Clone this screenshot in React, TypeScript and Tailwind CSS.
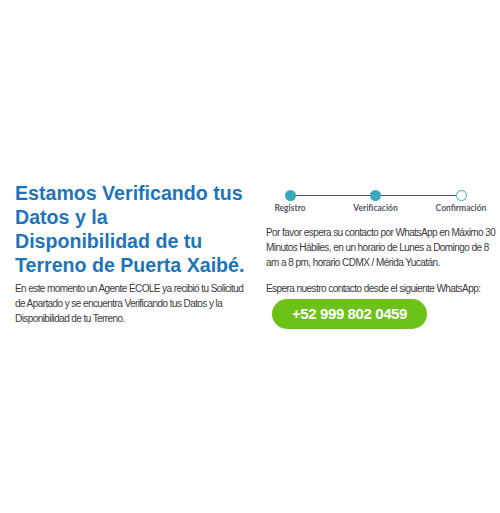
import React from "react";

export default function App() {
  const steps = ["Registro", "Verificación", "Confirmación"];
  return (
    <div className="w-[500px] h-[513px] bg-white" style={{ fontFamily: '"Liberation Sans", Arial, sans-serif' }}>
      <div className="flex pt-[181px] pl-[15px] pr-[5px] gap-[15px]">
        <div className="w-[235px] shrink-0">
          <h1 className="text-[19.6px] leading-[24px] font-bold text-[#1c75bc] whitespace-nowrap">
            Estamos Verificando tus
            <br />
            Datos y la
            <br />
            Disponibilidad de tu
            <br />
            Terreno de Puerta Xaibé.
          </h1>
          <p className="mt-[4px] text-[10px] leading-[15px] text-[#3a3a3a] tracking-[-0.58px] whitespace-nowrap">
            En este momento un Agente ÉCOLE ya recibió tu Solicitud
            <br />
            de Apartado y se encuentra Verificando tus Datos y la
            <br />
            Disponibilidad de tu Terreno.
          </p>
        </div>
        <div className="flex-1 pt-[9px]">
          <div className="relative flex justify-between w-[221px]" style={{ fontFamily: 'Lato, "Noto Sans", sans-serif' }}>
            <div className="absolute left-[30px] right-[30px] top-[5px] h-[1px] bg-[#4d5260]" />
            {steps.map((s, i) => (
              <div key={s} className="relative flex flex-col items-center w-[50px]">
                <div className={"w-[11px] h-[11px] rounded-full " + (i < 2 ? "bg-[#3aa9c0]" : "bg-white border border-[#3aa9c0]")} />
                <div className="mt-[2px] text-[8.5px] leading-[10px] font-bold text-[#555a66] whitespace-nowrap">{s}</div>
              </div>
            ))}
          </div>
          <p className="mt-[12px] text-[10px] leading-[15px] text-[#3a3a3a] tracking-[-0.56px] pl-[1px] whitespace-nowrap">
            Por favor espera su contacto por WhatsApp en Máximo 30
            <br />
            Minutos Hábiles, en un horario de Lunes a Domingo de 8
            <br />
            am a 8 pm, horario CDMX / Mérida Yucatán.
          </p>
          <p className="mt-[11px] text-[10px] leading-[15px] text-[#3a3a3a] tracking-[-0.56px] pl-[1px] whitespace-nowrap">
            Espera nuestro contacto desde el siguiente WhatsApp:
          </p>
          <div className="mt-[3px] ml-[7px] w-[155px] h-[30px] rounded-full bg-[#6cc217] flex items-center justify-center text-white font-bold text-[15px] tracking-[-0.4px]">
            +52 999 802 0459
          </div>
        </div>
      </div>
    </div>
  );
}
